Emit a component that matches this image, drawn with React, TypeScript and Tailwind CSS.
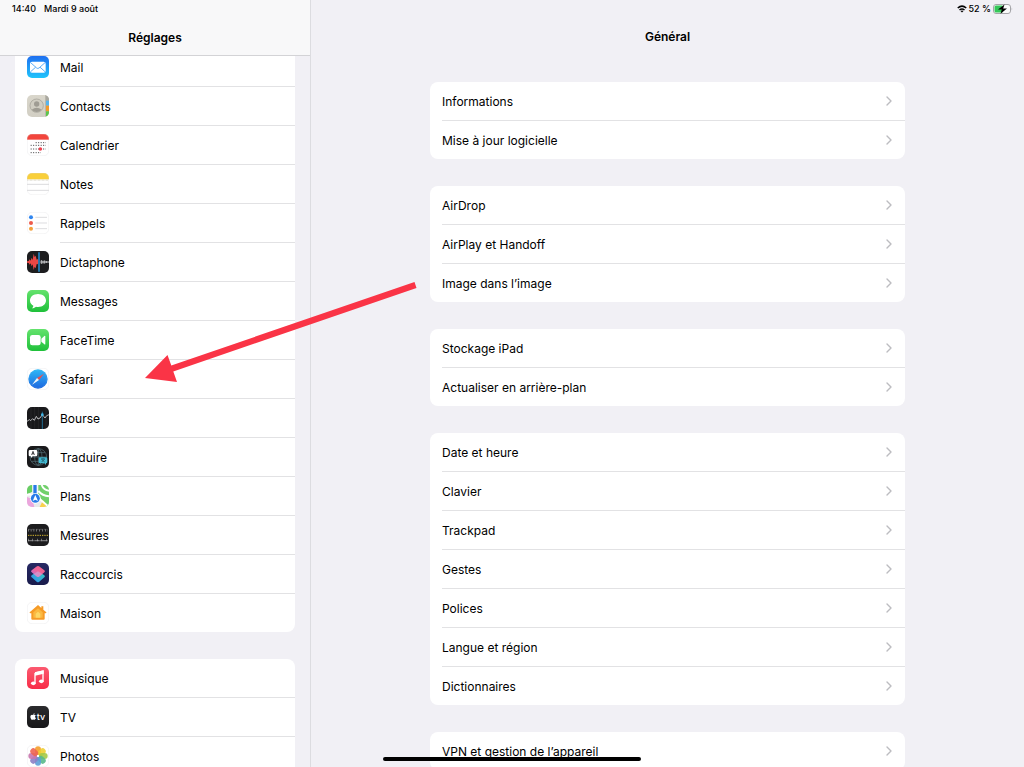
import type { ReactNode } from "react";
import { FaApple } from "react-icons/fa";

type Item = { label: string; icon: ReactNode };

/* App icons are drawn on a 66-unit square. */
function Tile({ id, from, to, outlined, children }: { id: string; from: string; to: string; outlined?: boolean; children?: ReactNode }) {
  return (
    <svg viewBox="0 0 66 66" className="size-[22px] shrink-0" aria-hidden="true">
      <defs>
        <linearGradient id={`${id}-bg`} x1="0" y1="0" x2="0" y2="1">
          <stop offset="0" stopColor={from} />
          <stop offset="1" stopColor={to} />
        </linearGradient>
        <clipPath id={`${id}-clip`}>
          <rect width="66" height="66" rx="15" />
        </clipPath>
      </defs>
      <g clipPath={`url(#${id}-clip)`}>
        <rect width="66" height="66" fill={`url(#${id}-bg)`} />
        {children}
      </g>
      {outlined && <rect x="1" y="1" width="64" height="64" rx="14" fill="none" stroke="#d8d8dc" strokeOpacity="0.400" strokeWidth="2" />}
    </svg>
  );
}

const mail = (
  <Tile id="mail" from="#1f6ff0" to="#1fc4fb">
    <rect x="9" y="17" width="47" height="33" rx="6" fill="#fff" />
    <path d="M11 20 L29 36 Q32.500 39 36 36 L54 20 M11 47 L26 33.500 M54 47 L39 33.500" fill="none" stroke="#3d9df5" strokeWidth="2.500" />
  </Tile>
);

const contacts = (
  <Tile id="contacts" from="#d9d6cb" to="#d2cfc4">
    <rect x="54" width="12" height="66" fill="#b9b6ab" />
    <rect x="57" y="2" width="9" height="15" fill="#a9a8a0" />
    <rect x="57" y="17" width="9" height="15" fill="#57b5ee" />
    <rect x="57" y="32" width="9" height="17" fill="#f39a2b" />
    <rect x="57" y="49" width="9" height="17" fill="#5cc64c" />
    <circle cx="29" cy="32" r="20" fill="#d0cdc2" stroke="#aaa79d" strokeWidth="2.500" />
    <circle cx="29" cy="27" r="8" fill="#9f9c93" />
    <path d="M14 44 Q29 32 44 44 Q29 58 14 44Z" fill="#9f9c93" />
  </Tile>
);

const calendar = (
  <Tile id="calendar" from="#ffffff" to="#ffffff" outlined>
    <rect width="66" height="17" fill="#f2453c" />
    <g stroke="#3c3c3e" strokeWidth="3" strokeDasharray="3 4.500">
      <path d="M26 26H57M11 34H57M11 45H57M11 56H42" />
    </g>
    <circle cx="40" cy="45" r="5.500" fill="#f0414f" />
  </Tile>
);

const notes = (
  <Tile id="notes" from="#ffffff" to="#ffffff" outlined>
    <rect width="66" height="19" fill="#f9cf3a" />
    <path d="M1 21.500H65" stroke="#b8b29a" strokeWidth="2" strokeDasharray="2 2" />
    <path d="M0 34H66M0 52H66" stroke="#d4d4d6" strokeWidth="2.500" />
  </Tile>
);

const reminders = (
  <Tile id="reminders" from="#ffffff" to="#ffffff" outlined>
    <path d="M25 16H60M25 33H60M25 50H60" stroke="#d5d5d8" strokeWidth="2.500" />
    <circle cx="12" cy="16" r="6" fill="#3186ef" />
    <circle cx="12" cy="33" r="6" fill="#ee5a4b" />
    <circle cx="12" cy="50" r="6" fill="#f4a03c" />
  </Tile>
);

const voiceMemos = (
  <Tile id="voice" from="#1d1d1f" to="#1d1d1f">
    <path d="M0 31 L5 30 L8 25 L11 29 L14 20 L17 27 L20 8 L23 18 L26 14 L29 26 L33 24 L35 33 L33 40 L29 39 L26 52 L23 47 L20 57 L17 40 L14 46 L11 37 L8 41 L5 36 L0 35Z" fill="#ea4744" />
    <path d="M36 4V62" stroke="#2385c4" strokeWidth="5" />
    <path d="M40 33H66" stroke="#d0d0d2" strokeWidth="3" />
    <path d="M43 27V39M48 29V38M53 28V38M58 30V36" stroke="#d0d0d2" strokeWidth="2.500" />
  </Tile>
);

const messages = (
  <Tile id="messages" from="#64e36d" to="#1fc03a">
    <path d="M33 12C19 12 9 20.500 9 31.500C9 38.500 13 44 19 47.500C19 51 17 53.500 15 55C20 55 24.500 53 27 50.500C29 51 31 51 33 51C47 51 57 42.500 57 31.500C57 20.500 47 12 33 12Z" fill="#fff" />
  </Tile>
);

const facetime = (
  <Tile id="facetime" from="#64e36d" to="#1fc03a">
    <rect x="9" y="18" width="32" height="31" rx="7" fill="#fff" />
    <path d="M43 29 L52 21 Q55 19 55 23 V44 Q55 48 52 46 L43 38Z" fill="#fff" />
  </Tile>
);

const safari = (
  <Tile id="safari" from="#ffffff" to="#ffffff" outlined>
    <defs>
      <linearGradient id="safari-dial" x1="0" y1="0" x2="0" y2="1">
        <stop offset="0" stopColor="#30b8f6" />
        <stop offset="1" stopColor="#1c66df" />
      </linearGradient>
    </defs>
    <circle cx="33" cy="33" r="29" fill="url(#safari-dial)" />
    <circle cx="33" cy="33" r="26" fill="none" stroke="#8fcdf8" strokeOpacity="0.600" strokeWidth="2" strokeDasharray="1 3" />
    <path d="M51 17 L36 36 L30 30Z" fill="#ef4d4a" />
    <path d="M15 50 L30 30 L36 36Z" fill="#f2f5f8" />
  </Tile>
);

const stocks = (
  <Tile id="stocks" from="#19191b" to="#19191b">
    <path d="M12 0V66M23 0V66M34 0V66M57 0V66" stroke="#2a2a2c" strokeWidth="2" />
    <path d="M46 14V66" stroke="#226d91" strokeWidth="3" />
    <path d="M0 43 L7 38 L11 41 L17 35 L22 40 L28 28 L33 36 L39 33 L46 23 L50 28 L54 33 L59 26 L66 23" fill="none" stroke="#d5d5d7" strokeWidth="2.500" />
    <circle cx="46" cy="23" r="4" fill="#41b6e8" />
  </Tile>
);

const translate = (
  <Tile id="translate" from="#19191b" to="#19191b">
    <g fill="none" stroke="#59747c" strokeWidth="2">
      <circle cx="34" cy="33" r="25" />
      <ellipse cx="34" cy="33" rx="11" ry="25" />
      <path d="M9 33H59M34 8V58M14 20H54M14 46H54" />
    </g>
    <path d="M9 12H27Q31 12 31 16V27Q31 31 27 31H17L12 36V31H9Q5 31 5 27V16Q5 12 9 12Z" fill="#fff" />
    <path d="M14 27 L18 16 L22 27 M15.500 23H20.500" fill="none" stroke="#29292b" strokeWidth="2.500" />
    <path d="M39 34H57Q61 34 61 38V48Q61 52 57 52V57L52 52H39Q35 52 35 48V38Q35 34 39 34Z" fill="#42b8d0" />
    <path d="M42 39H54M48 37V39M44 48L52 40M44 40L53 48" fill="none" stroke="#19414c" strokeWidth="2" />
  </Tile>
);

const maps = (
  <Tile id="maps" from="#eef0ee" to="#e8eaea">
    <path d="M34 0H66V66H58L34 34Z" fill="#71d06b" />
    <path d="M0 0H16V20L0 28Z" fill="#68ce63" />
    <path d="M0 36 Q18 40 22 66H0Z" fill="#eba6dd" />
    <path d="M38 66 L48 46 L64 66Z" fill="#f8d14d" />
    <path d="M0 29 Q18 26 34 38 L66 66 M34 18 Q46 32 66 34 M44 0 Q50 16 66 17" fill="none" stroke="#fff" strokeWidth="6" />
    <path d="M24 0V32" stroke="#fff" strokeWidth="15" />
    <path d="M24 0V32" stroke="#287be8" strokeWidth="10" />
    <circle cx="25" cy="40" r="16" fill="#fff" />
    <circle cx="25" cy="40" r="13.500" fill="#287be8" />
    <path d="M25 30 L33 48 L25 44 L17 48Z" fill="#fff" />
  </Tile>
);

const measure = (
  <Tile id="measure" from="#1c1c1e" to="#1c1c1e">
    <path d="M3 19H63" stroke="#c8c8ca" strokeWidth="7" strokeDasharray="1.500 7" />
    <path d="M3 16H63" stroke="#8f8f91" strokeWidth="2.500" strokeDasharray="1.500 2.500" />
    <path d="M3 34H63" stroke="#d5b62e" strokeWidth="3" strokeDasharray="4 3" />
    <path d="M3 50H63" stroke="#c8c8ca" strokeWidth="4" strokeDasharray="1.500 2" />
    <path d="M3 48H63" stroke="#c8c8ca" strokeWidth="8" strokeDasharray="1.500 12" />
  </Tile>
);

const shortcuts = (
  <Tile id="shortcuts" from="#272963" to="#191b4c">
    <defs>
      <linearGradient id="shortcuts-low" x1="0" y1="1" x2="1" y2="0">
        <stop offset="0" stopColor="#328cf0" />
        <stop offset="1" stopColor="#3ad0b8" />
      </linearGradient>
      <linearGradient id="shortcuts-top" x1="1" y1="0" x2="0" y2="1">
        <stop offset="0" stopColor="#f45e7d" />
        <stop offset="0.500" stopColor="#ee659c" />
        <stop offset="1" stopColor="#b970d6" />
      </linearGradient>
    </defs>
    <path d="M33 24 L52 37 Q56 40 52 43 L36 57 Q33 59 30 57 L14 43 Q10 40 14 37Z" fill="url(#shortcuts-low)" />
    <path d="M30 10 Q33 8 36 10 L52 22 Q56 25 52 28 L36 41 Q33 43 30 41 L14 28 Q10 25 14 22Z" fill="url(#shortcuts-top)" />
    <path d="M20 33 L33 25 L46 33 L36 41 Q33 43 30 41Z" fill="#c9b5e4" opacity="0.500" />
  </Tile>
);

const home = (
  <Tile id="home" from="#ffffff" to="#ffffff" outlined>
    <path d="M33 9 L43 18 V13 H49 V23 L58 31 Q59 34 55 34 H53 V50 Q53 53 50 53 H16 Q13 53 13 50 V34 H11 Q7 34 8 31Z" fill="#f69b27" />
    <path d="M33 19 L47 31 V47 H19 V31Z" fill="#fbb941" />
    <path d="M33 29 L40 35 V47 H26 V35Z" fill="#fdd765" />
  </Tile>
);

const music = (
  <Tile id="music" from="#fb5a70" to="#f82d48">
    <path d="M24 18 L48 12 V43" fill="none" stroke="#fff" strokeWidth="4" />
    <path d="M24 16 L50 10 V20 L24 26Z" fill="#fff" />
    <path d="M24 18V49" stroke="#fff" strokeWidth="4" />
    <ellipse cx="19" cy="49" rx="7" ry="5.500" fill="#fff" />
    <ellipse cx="43" cy="43" rx="7" ry="5.500" fill="#fff" />
  </Tile>
);

const tv = (
  <Tile id="tv" from="#2b2b2d" to="#171719">
    <FaApple x="7" y="20" size={23} color="#fff" />
    <text x="29" y="43" fontSize="27" fontWeight="500" fontFamily="Inter, sans-serif" fill="#fff">tv</text>
  </Tile>
);

const petals: [number, string][] = [
  [0, "#f59d2a"],
  [45, "#f0cf34"],
  [90, "#a5c947"],
  [135, "#59b989"],
  [180, "#5d9fd8"],
  [225, "#8c7fc5"],
  [270, "#c877ae"],
  [315, "#ed6552"],
];

const photos = (
  <Tile id="photos" from="#ffffff" to="#ffffff" outlined>
    {petals.map(([angle, color]) => (
      <rect key={angle} x="24" y="4" width="18" height="26" rx="9" fill={color} opacity="0.900" transform={`rotate(${angle} 33 33)`} />
    ))}
    <circle cx="33" cy="33" r="3" fill="#fff" />
  </Tile>
);

const sidebar: Item[][] = [
  [
    { label: "Mail", icon: mail },
    { label: "Contacts", icon: contacts },
    { label: "Calendrier", icon: calendar },
    { label: "Notes", icon: notes },
    { label: "Rappels", icon: reminders },
    { label: "Dictaphone", icon: voiceMemos },
    { label: "Messages", icon: messages },
    { label: "FaceTime", icon: facetime },
    { label: "Safari", icon: safari },
    { label: "Bourse", icon: stocks },
    { label: "Traduire", icon: translate },
    { label: "Plans", icon: maps },
    { label: "Mesures", icon: measure },
    { label: "Raccourcis", icon: shortcuts },
    { label: "Maison", icon: home },
  ],
  [
    { label: "Musique", icon: music },
    { label: "TV", icon: tv },
    { label: "Photos", icon: photos },
  ],
];

const general = [
  ["Informations", "Mise à jour logicielle"],
  ["AirDrop", "AirPlay et Handoff", "Image dans l’image"],
  ["Stockage iPad", "Actualiser en arrière-plan"],
  ["Date et heure", "Clavier", "Trackpad", "Gestes", "Polices", "Langue et région", "Dictionnaires"],
  ["VPN et gestion de l’appareil"],
];

function Chevron() {
  return (
    <svg viewBox="0 0 6 10" className="h-[10px] w-[6px]" aria-hidden="true">
      <path d="M1 1 L5 5 L1 9" fill="none" stroke="#bcbcc0" strokeWidth="1.400" strokeLinecap="round" strokeLinejoin="round" />
    </svg>
  );
}

function Battery() {
  return (
    <svg viewBox="0 0 20 10" className="h-[10px] w-[20px]" aria-hidden="true">
      <rect x="0.500" y="0.500" width="17" height="9" rx="2.500" fill="#fafafa" stroke="#a5a5a9" />
      <path d="M3 1.500H9.500V8.500H3Q1.500 8.500 1.500 7V3Q1.500 1.500 3 1.500Z" fill="#35c759" />
      <path d="M18.700 3.500 Q19.800 5 18.700 6.500Z" fill="#a5a5a9" />
      <path d="M11.500 0.500 L5 5.500 H8.800 L7.500 9.700 L14 4.500 H10.200Z" fill="#000" />
    </svg>
  );
}

function Wifi() {
  return (
    <svg viewBox="0 0 20 15" className="h-[8px] w-[10px]" aria-hidden="true">
      <path d="M1.500 5.500 Q10 -2 18.500 5.500" fill="none" stroke="#000" strokeWidth="3" />
      <path d="M5 9.500 Q10 5.500 15 9.500" fill="none" stroke="#000" strokeWidth="3" />
      <path d="M10 14.500 L7 11.500 Q10 9.500 13 11.500Z" fill="#000" />
    </svg>
  );
}

export default function App() {
  return (
    <div className="relative flex h-screen overflow-hidden bg-[#f1f0f5] font-['Inter','Liberation_Sans',sans-serif] text-[12px] leading-4 text-black">
      <aside className="flex w-[311px] shrink-0 flex-col border-r border-[#dcdce0]">
        <header className="flex h-14 shrink-0 flex-col border-b border-[#d3d3d6] bg-[#f8f8f9]">
          <div className="flex h-[18px] shrink-0 items-center gap-2 px-3 text-[9px] font-medium leading-3">
            <time>14:40</time>
            <span>Mardi 9 août</span>
          </div>
          <h1 className="flex flex-1 items-center justify-center pt-0.5 text-[12px] font-semibold">Réglages</h1>
        </header>
        <nav aria-label="Réglages" className="min-h-0 flex-1 overflow-hidden px-[15px]">
          <div className="-mt-2 flex flex-col gap-[27px]">
            {sidebar.map((group) => (
              <ul key={group[0].label} className="overflow-hidden rounded-lg bg-white">
                {group.map((item) => (
                  <li key={item.label} className="group">
                    <a href="#" className="flex gap-[11px] pl-3">
                      <span className="flex h-[38px] items-center">{item.icon}</span>
                      <span className="flex h-[39px] flex-1 items-center border-b border-[#e2e2e4] pt-0.5 group-last:h-[38px] group-last:border-b-0">
                        {item.label}
                      </span>
                    </a>
                  </li>
                ))}
              </ul>
            ))}
          </div>
        </nav>
      </aside>

      <main className="flex min-w-0 flex-1 flex-col">
        <div className="flex h-[18px] shrink-0 items-center justify-end gap-0.5 pr-[11px] text-[9px] font-medium leading-3">
          <Wifi />
          <span>52 %</span>
          <Battery />
        </div>
        <h2 className="flex h-[38px] shrink-0 items-center justify-center text-[12px] font-semibold">Général</h2>
        <div className="mx-auto flex min-h-0 w-full max-w-[475px] flex-1 flex-col gap-[27px] overflow-hidden pt-[26px]">
          {general.map((group) => (
            <ul key={group[0]} className="shrink-0 overflow-hidden rounded-lg bg-white">
              {group.map((label) => (
                <li key={label} className="group pl-3">
                  <a
                    href="#"
                    className="flex h-[39px] items-center justify-between border-b border-[#e2e2e4] pr-[13px] group-last:h-[38px] group-last:border-b-0"
                  >
                    <span className="pt-0.5">{label}</span>
                    <Chevron />
                  </a>
                </li>
              ))}
            </ul>
          ))}
        </div>
      </main>

      <svg viewBox="0 0 272 102" className="pointer-events-none absolute left-[145px] top-[281px] h-[102px] w-[272px]" aria-hidden="true">
        <path d="M0 97 L22.500 74 L26.300 84.500 L269.500 1 L271.500 7 L28.300 90.500 L32 101Z" fill="#fa3446" />
      </svg>
      <div className="absolute bottom-[6px] left-1/2 h-1 w-[258px] -translate-x-1/2 rounded-full bg-black" />
    </div>
  );
}
